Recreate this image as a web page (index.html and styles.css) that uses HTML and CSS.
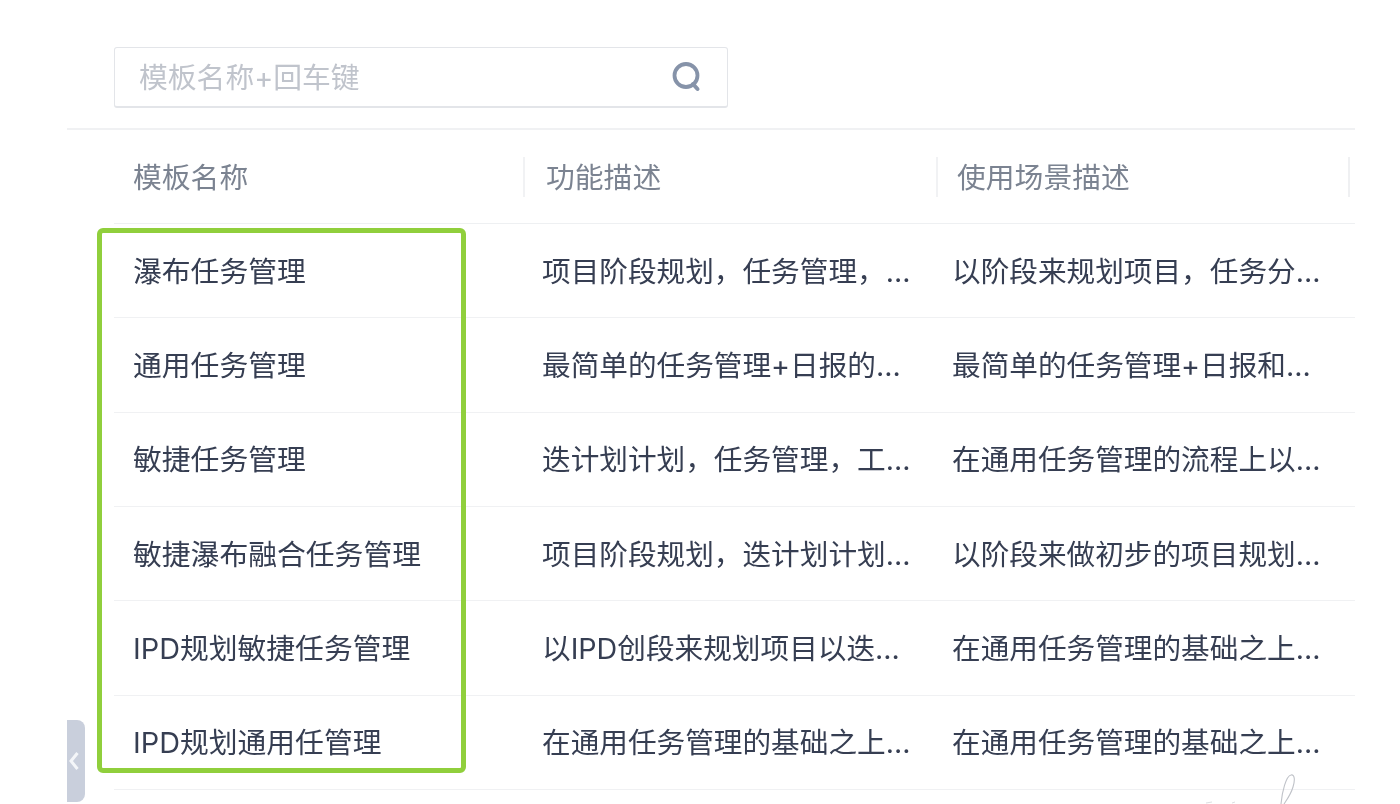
FILE: index.html
```html
<!DOCTYPE html>
<html lang="zh-CN">
<head>
<meta charset="utf-8">
<title>模板列表</title>
<link rel="stylesheet" href="styles.css">
</head>
<body>
<main class="page">
  <div class="toolbar">
    <div class="search">
      <span class="placeholder">模板名称+回车键</span>
      <svg class="search-icon" width="32" height="32" viewBox="0 0 32 32" aria-hidden="true"><circle cx="15" cy="14.5" r="11.5" fill="none" stroke="#8693a9" stroke-width="3.8"/><path d="M22 23l4.5 5" fill="none" stroke="#8693a9" stroke-width="4" stroke-linecap="round"/></svg>
    </div>
  </div>
  <div class="table">
    <div class="row head">
      <div class="th first">模板名称</div>
      <div class="th second">功能描述</div>
      <div class="th third">使用场景描述</div>
      <div class="end-sep"></div>
    </div>
    <div class="row body"><div class="td first">瀑布任务管理</div><div class="td second">项目阶段规划，任务管理，...</div><div class="td third">以阶段来规划项目，任务分...</div></div>
    <div class="row body"><div class="td first">通用任务管理</div><div class="td second">最简单的任务管理+日报的...</div><div class="td third">最简单的任务管理+日报和...</div></div>
    <div class="row body"><div class="td first">敏捷任务管理</div><div class="td second">迭计划计划，任务管理，工...</div><div class="td third">在通用任务管理的流程上以...</div></div>
    <div class="row body"><div class="td first">敏捷瀑布融合任务管理</div><div class="td second">项目阶段规划，迭计划计划...</div><div class="td third">以阶段来做初步的项目规划...</div></div>
    <div class="row body"><div class="td first">IPD规划敏捷任务管理</div><div class="td second">以IPD创段来规划项目以迭...</div><div class="td third">在通用任务管理的基础之上...</div></div>
    <div class="row body"><div class="td first">IPD规划通用任管理</div><div class="td second">在通用任务管理的基础之上...</div><div class="td third">在通用任务管理的基础之上...</div></div>
  </div>
</main>
<div class="highlight"></div>
<div class="collapse-tab">
  <svg width="12" height="22" viewBox="0 0 12 22" aria-hidden="true"><path d="M9.5 3L3 11l6.5 8" fill="none" stroke="#f4f6f9" stroke-width="3"/></svg>
</div>
<svg class="scribble" width="110" height="32" viewBox="0 0 110 32" aria-hidden="true"><path d="M81 32C82 20 86 4 91 3c4-1 4 6 2 12-2 7-5 11-9 17" fill="none" stroke="#bfc2c8" stroke-width="1.1"/><path d="M6 31l6-1M32 31l3-1" fill="none" stroke="#dcdee1" stroke-width="1"/></svg>
</body>
</html>
```
FILE: styles.css
```css
* { box-sizing: border-box; }
html, body { margin: 0; height: 804px; overflow: hidden; background: #fff; }
body {
  position: relative;
  font-family: Inter, "Noto Sans CJK SC", "Noto Sans", sans-serif;
  font-size: 28.8px;
  color: #363e52;
}
.page { width: 1355px; padding: 47px 0 0 67px; filter: blur(0.45px); }
.toolbar { height: 83px; padding-left: 47px; border-bottom: 2px solid #f0f1f3; }
.search {
  width: 614px; height: 61px; display: flex; align-items: center; justify-content: space-between;
  padding: 2px 24px 0 24px; border: 1px solid #e3e5e9; border-bottom-width: 2px; border-radius: 3px;
}
.placeholder { color: #c0c4cc; line-height: 1; }
.search-icon { display: block; margin-top: -2px; }
.table { margin-left: 47px; }
.row { display: grid; grid-template-columns: 409px 413px 412px 7px; align-items: center; white-space: nowrap; }
.head { height: 94px; border-bottom: 1px solid #eef0f2; color: #7b8391; }
.body { height: 94.35px; padding-bottom: 3px; border-bottom: 1px solid #f0f1f3; }
.th { line-height: 40px; height: 40px; }
.th.first, .td.first { padding-left: 19px; }
.th.first, .th.second, .th.third { padding-top: 1px; }
.th.second { padding-left: 21px; border-left: 2px solid #f1f2f4; }
.th.third { padding-left: 19px; border-left: 2px solid #f1f2f4; }
.end-sep { height: 40px; border-left: 2px solid #eff0f2; }
.td.second { padding-left: 19px; font-size: 28.65px; }
.td.third { padding-left: 16px; font-size: 28.65px; }
.highlight {
  position: absolute; left: 97px; top: 228px; width: 369px; height: 545px;
  border: 5px solid #90cf3c; border-radius: 6px;
}
.collapse-tab {
  position: absolute; left: 67px; top: 720px; width: 18px; height: 82px;
  padding-left: 1px;
  background: #c9cfdc; border-radius: 0 8px 8px 0;
  display: flex; align-items: center; justify-content: flex-start;
}
.scribble { position: absolute; left: 1200px; top: 772px; }
```
